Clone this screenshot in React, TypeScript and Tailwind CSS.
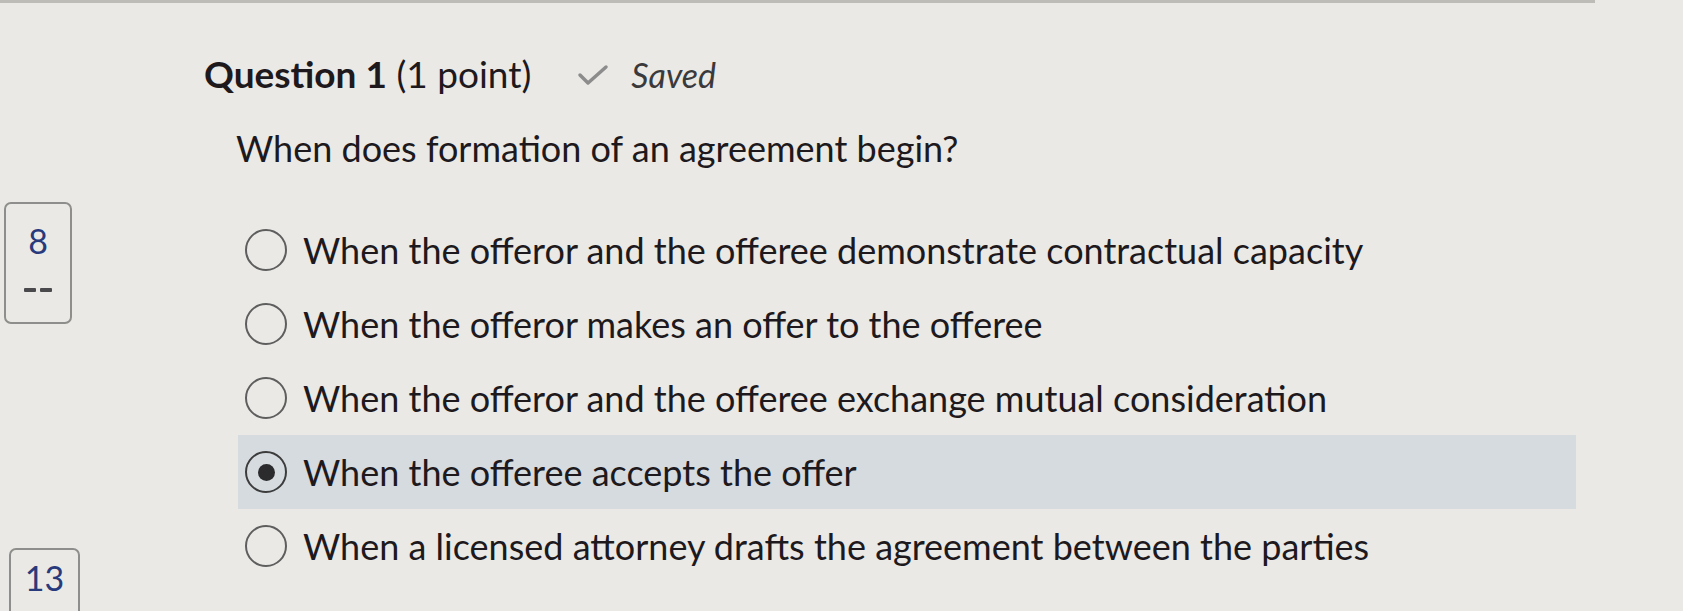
import React from "react"

const options = [
  { text: "When the offeror and the offeree demonstrate contractual capacity", selected: false },
  { text: "When the offeror makes an offer to the offeree", selected: false },
  { text: "When the offeror and the offeree exchange mutual consideration", selected: false },
  { text: "When the offeree accepts the offer", selected: true },
  { text: "When a licensed attorney drafts the agreement between the parties", selected: false },
]

function Radio({ checked }: { checked: boolean }) {
  return (
    <span
      className={
        checked
          ? "flex h-[42px] w-[42px] shrink-0 items-center justify-center rounded-full border-2 border-[#3c3c3c]"
          : "flex h-[42px] w-[42px] shrink-0 items-center justify-center rounded-full border-2 border-[#5e5e5e]"
      }
    >
      {checked && <span className="h-[17px] w-[17px] rounded-full bg-[#2b2b2d]" />}
    </span>
  )
}

export default function App() {
  return (
    <div className="flex h-[611px] w-[1683px] flex-col overflow-hidden bg-[#eae9e5] font-['Lato','Noto_Sans',sans-serif] text-[#1d191d]">
      {/* top edge of the page frame */}
      <div className="h-[3px] w-[1595px] shrink-0 bg-[#bdbcb7]" />

      <div className="flex flex-1">
        {/* Question navigator */}
        <div className="flex w-[204px] shrink-0 flex-col pl-[4px] pt-[199px]">
          <div className="flex h-[122px] w-[68px] flex-col items-center rounded-[7px] border-2 border-[#8e8e8c] pt-[17px]">
            <span className="text-[34px] leading-[40px] text-[#283a7c]">8</span>
            <span className="mt-[27px] flex gap-[4px]">
              <span className="h-[4px] w-[12px] rounded-[1px] bg-[#4a4a4c]" />
              <span className="h-[4px] w-[12px] rounded-[1px] bg-[#4a4a4c]" />
            </span>
          </div>
          <div className="ml-[5px] mt-[224px] flex h-[80px] w-[71px] flex-col items-center rounded-[7px] border-2 border-[#8e8e8c] pt-[8px]">
            <span className="text-[34px] leading-[40px] text-[#283a7c]">13</span>
          </div>
        </div>

        {/* Question */}
        <div className="flex flex-1 flex-col pt-[46px]">
          <div className="flex items-baseline">
            <h2 className="text-[37px] leading-[46px]">
              <span className="font-bold">Question 1</span> (1 point)
            </h2>
            <svg className="ml-[46px] h-[22px] w-[32px] self-center" viewBox="0 0 32 22" fill="none">
              <polyline points="3,11 11,19 29,3" stroke="#8c8c8c" strokeWidth="3.5" strokeLinecap="round" strokeLinejoin="round" />
            </svg>
            <span className="ml-[22px] text-[34px] italic text-[#3a3a3c]">Saved</span>
          </div>

          <p className="ml-[32px] mt-[27px] text-[36px] leading-[43px]">When does formation of an agreement begin?</p>

          <div className="mt-[43px] flex flex-col">
            {options.map((o) => (
              <div
                key={o.text}
                className={
                  o.selected
                    ? "ml-[34px] flex h-[74px] w-[1338px] items-center gap-[16px] bg-[#d6dbdf] pl-[7px]"
                    : "ml-[34px] flex h-[74px] w-[1338px] items-center gap-[16px] pl-[7px]"
                }
              >
                <Radio checked={o.selected} />
                <span className="text-[36px] leading-[42px]">{o.text}</span>
              </div>
            ))}
          </div>
        </div>
      </div>
    </div>
  )
}
